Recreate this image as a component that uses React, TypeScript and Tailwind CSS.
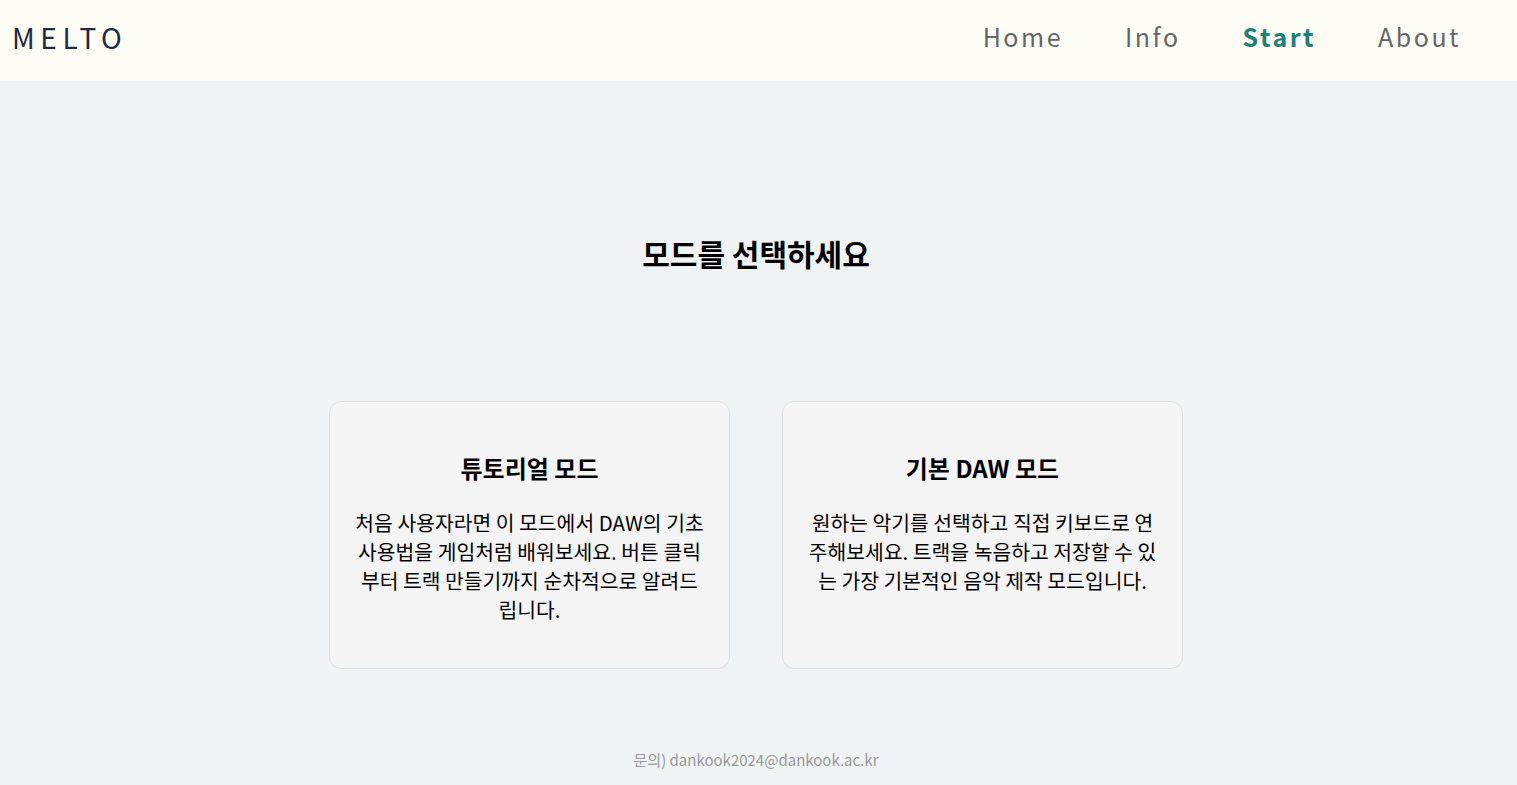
import React from "react";

const font = { fontFamily: '"Noto Sans CJK KR", "Noto Sans", sans-serif' };

export default function App() {
  return (
    <div className="min-h-[785px] bg-[#f0f3f3] flex flex-col text-black" style={font}>
      <header className="h-[81px] bg-[#fdfdf5] flex items-center justify-between pl-3 pr-[56px] pb-[8px]">
        <div className="text-[28px] tracking-[0.2em] text-[#1f2a44] leading-none">MELTO</div>
        <nav className="flex items-center gap-[62px] text-[25px] tracking-[2.5px] text-[#666666] leading-none">
          <span>Home</span>
          <span>Info</span>
          <span className="font-bold text-[#1e8076]">Start</span>
          <span>About</span>
        </nav>
      </header>
      <main className="flex flex-col items-center flex-1 pr-[5px]">
        <h1 className="mt-[152px] text-[30px] font-bold leading-[40px]">모드를 선택하세요</h1>
        <div className="mt-[128px] flex gap-[52px]">
          <div className="w-[401px] h-[268px] bg-[#f4f4f4] border border-[#e0e0e0] rounded-[12px] px-6 pt-[50px] text-center">
            <h2 className="text-[24px] font-bold leading-[32px]">튜토리얼 모드</h2>
            <p className="mt-6 text-[20.4px] leading-[29px]">처음 사용자라면 이 모드에서 DAW의 기초 사용법을 게임처럼 배워보세요. 버튼 클릭부터 트랙 만들기까지 순차적으로 알려드립니다.</p>
          </div>
          <div className="w-[401px] h-[268px] bg-[#f4f4f4] border border-[#e0e0e0] rounded-[12px] px-6 pt-[50px] text-center">
            <h2 className="text-[24px] font-bold leading-[32px]">기본 DAW 모드</h2>
            <p className="mt-6 text-[20.4px] leading-[29px]">원하는 악기를 선택하고 직접 키보드로 연주해보세요. 트랙을 녹음하고 저장할 수 있는 가장 기본적인 음악 제작 모드입니다.</p>
          </div>
        </div>
        <footer className="mt-auto mb-[14px] text-[15px] text-[#999999]">문의) dankook2024@dankook.ac.kr</footer>
      </main>
    </div>
  );
}
